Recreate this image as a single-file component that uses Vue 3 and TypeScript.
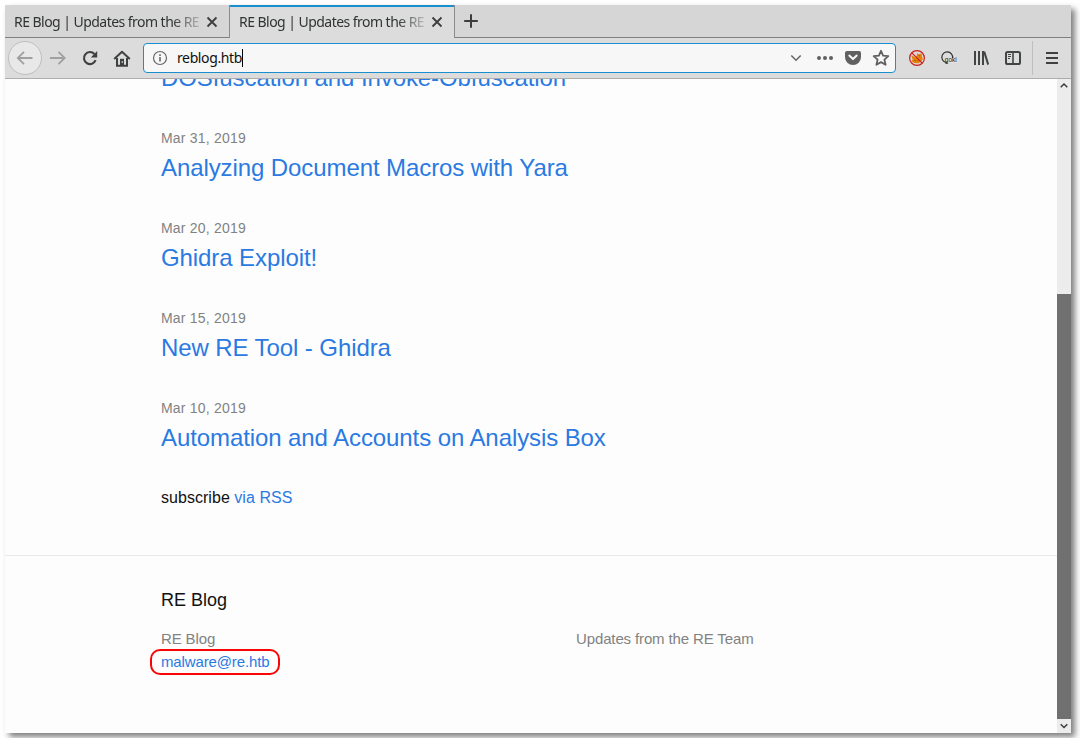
<script setup lang="ts">
interface Post {
  date: string
  title: string
}

const tabs: { title: string; active: boolean }[] = [
  { title: 'RE Blog | Updates from the RE', active: false },
  { title: 'RE Blog | Updates from the RE', active: true },
]

const posts: Post[] = [
  { date: '', title: 'DOSfuscation and Invoke-Obfuscation' },
  { date: 'Mar 31, 2019', title: 'Analyzing Document Macros with Yara' },
  { date: 'Mar 20, 2019', title: 'Ghidra Exploit!' },
  { date: 'Mar 15, 2019', title: 'New RE Tool - Ghidra' },
  { date: 'Mar 10, 2019', title: 'Automation and Accounts on Analysis Box' },
]
</script>

<template>
  <div class="window">
    <div class="tabbar">
      <div v-for="(tab, i) in tabs" :key="i" class="tab" :class="{ active: tab.active }">
        <span class="tab-title">{{ tab.title }}</span>
        <svg class="close" width="12" height="12" viewBox="0 0 12 12"><path d="M1.5 1.5l9 9M10.5 1.5l-9 9" /></svg>
      </div>
      <div class="tab-rest">
        <svg width="16" height="16" viewBox="0 0 16 16"><path d="M8 1.2v13.6M1.2 8h13.6" stroke="#3c3e3e" stroke-width="2" /></svg>
      </div>
    </div>

    <div class="toolbar">
      <div class="back">
        <svg width="18" height="16" viewBox="0 0 18 16"><path d="M16.5 8H2M8 1.8L1.8 8 8 14.2" /></svg>
      </div>
      <svg class="forward" width="18" height="16" viewBox="0 0 18 16"><path d="M1 8h14.5M9.5 1.8L15.7 8l-6.2 6.2" /></svg>
      <svg class="reload" width="16" height="16" viewBox="0 0 16 16">
        <path d="M13.6 10.2A6 6 0 1 1 12.4 4" fill="none" stroke="#3f4141" stroke-width="2.1" />
        <path d="M15.2 1v6.4H8.8z" fill="#3f4141" />
      </svg>
      <svg class="home" width="18" height="17" viewBox="0 0 18 17">
        <path d="M1.2 9L9 1.8 16.8 9" fill="none" stroke="#3f4141" stroke-width="2" stroke-linejoin="round" />
        <path d="M4 8v7.8h10V8" fill="none" stroke="#3f4141" stroke-width="2" />
        <path d="M7 15.5V8.8h4v6.7z" fill="#3f4141" />
        <path d="M9.2 11v2" stroke="#ddd" />
      </svg>

      <div class="urlbar">
        <svg class="info" width="16" height="16" viewBox="0 0 16 16">
          <circle cx="8" cy="8" r="6.5" fill="none" stroke="#666" stroke-width="1.2" />
          <path d="M8 7v4.6M8 4.2v1.7" stroke="#666" stroke-width="1.6" />
        </svg>
        <span class="url">reblog.htb</span>
        <span class="caret"></span>
        <span class="grow"></span>
        <svg class="chevron" width="12" height="8" viewBox="0 0 12 8"><path d="M1.3 1.5L6 6.2l4.7-4.7" fill="none" stroke="#666" stroke-width="1.5" /></svg>
        <svg class="dots" width="18" height="6" viewBox="0 0 18 6" fill="#606060"><circle cx="3" cy="3" r="2" /><circle cx="9" cy="3" r="2" /><circle cx="15" cy="3" r="2" /></svg>
        <svg class="pocket" width="16" height="14" viewBox="0 0 16 14">
          <path d="M2 0h12a2 2 0 0 1 2 2v4a8 8 0 0 1-16 0V2a2 2 0 0 1 2-2z" fill="#606060" />
          <path d="M4.3 4.6L8 8.1l3.7-3.5" fill="none" stroke="#f7f7f7" stroke-width="2" stroke-linecap="round" stroke-linejoin="round" />
        </svg>
        <svg class="star" width="18" height="18" viewBox="0 0 18 18"><path d="M9 1.8l2.1 4.8 5.2.5-3.9 3.5 1.2 5.2L9 13.1l-4.6 2.7 1.2-5.2-3.9-3.5 5.2-.5z" fill="none" stroke="#606060" stroke-width="1.8" stroke-linejoin="round" /></svg>
      </div>

      <svg class="foxy" width="18" height="18" viewBox="0 0 18 18">
        <circle cx="9" cy="9" r="7.4" fill="#ddd6d2" />
        <path d="M3.4 6.6l2.2.6 1.6 1.2 1.6-1.6.4-2.6 1.8 1 2.8-.8.2 3.2.8 2.4-1.6 2.6-2.8 1.6-3.6-.2-3.4-1.2 1.2-2.2z" fill="#e5820c" />
        <path d="M10.6 6.6l1.4.4M6 11l2 1.2M9.6 11.2l1.6-.4" stroke="#9c5708" />
        <circle cx="9" cy="9" r="7.4" fill="none" stroke="#cc2020" stroke-width="1.2" />
        <path d="M3.8 3.8l10.4 10.4" stroke="#cc2020" stroke-width="1.2" />
      </svg>
      <svg class="goki" width="18" height="16" viewBox="0 0 18 16">
        <path d="M8 12.6A5.4 5.4 0 1 1 12.6 8" fill="none" stroke="#303030" stroke-width="1.2" />
        <path d="M6 8.6h10.5v4.2H7z" fill="#e6e6e6" />
        <text x="4.8" y="12.2">goki</text>
      </svg>
      <svg class="library" width="16" height="14" viewBox="0 0 16 14"><path d="M2 0v14M6 0v14M10 0v14M11.2 .6l4 13" fill="none" stroke="#434545" stroke-width="2" /></svg>
      <svg class="sidebar" width="16" height="14" viewBox="0 0 16 14">
        <rect x="1" y="1" width="14" height="12" rx="1.6" fill="none" stroke="#434545" stroke-width="2" />
        <path d="M8 1v12" stroke="#434545" stroke-width="1.6" />
        <path d="M3 3.5h3M3 5.5h3M3 7.5h2" stroke="#434545" />
      </svg>
      <span class="separator"></span>
      <svg class="menu" width="12" height="12" viewBox="0 0 12 12"><path d="M0 1h12M0 6h12M0 11h12" stroke="#3f4141" stroke-width="2" /></svg>
    </div>

    <div class="viewport">
      <div class="page">
        <main class="content">
          <ul class="posts">
            <li v-for="post in posts" :key="post.title">
              <div class="date">{{ post.date }}</div>
              <h3><a>{{ post.title }}</a></h3>
            </li>
          </ul>
          <p class="subscribe">subscribe <a>via RSS</a></p>
        </main>
        <footer>
          <h2>RE Blog</h2>
          <div class="columns">
            <div class="contact">
              <div>RE Blog</div>
              <div class="mail"><a>malware@re.htb</a><span class="mark"></span></div>
            </div>
            <div>Updates from the RE Team</div>
          </div>
        </footer>
      </div>
      <div class="scrollbar">
        <svg width="14" height="14" viewBox="0 0 14 14"><path d="M3.7 8.3L7 5l3.3 3.3" /></svg>
        <div class="track"><div class="thumb"></div></div>
        <svg width="14" height="14" viewBox="0 0 14 14"><path d="M3.7 5.2L7 8.5l3.3-3.3" /></svg>
      </div>
    </div>
  </div>
</template>

<style>
html {
  background: #fff;
  overflow: hidden;
}
body {
  margin: 0;
}
</style>

<style scoped>
* {
  box-sizing: border-box;
}
svg {
  display: block;
  flex: none;
}
.window {
  width: 1066px;
  height: 728px;
  margin: 5px;
  display: flex;
  flex-direction: column;
  box-shadow: 4px 4px 6px rgba(0, 0, 0, 0.5);
  background: #fdfdfd;
}
.tabbar {
  height: 33px;
  flex: none;
  display: flex;
  background: #d6d6d6;
  font: 14px/20px "Noto Sans", sans-serif;
  color: #303333;
}
.tab {
  width: 224px;
  display: flex;
  align-items: center;
  padding: 1px 11px 0 9px;
  border-bottom: 1px solid #808080;
}
.tab.active {
  width: 226px;
  border: 1px solid #8c8c8c;
  border-top: 0;
  border-bottom: 0;
  background: #dcdcdc;
  box-shadow: inset 0 2px #1a8fd0;
}
.tab-title {
  width: 188px;
  white-space: nowrap;
  overflow: hidden;
  letter-spacing: -0.54px;
  -webkit-mask-image: linear-gradient(to right, #000 158px, transparent 192px);
  mask-image: linear-gradient(to right, #000 158px, transparent 192px);
}
.close {
  margin-left: 4px;
}
.close path {
  stroke: #3c3e3e;
  stroke-width: 1.8;
}
.tab-rest {
  flex: 1;
  padding: 8px 0 0 8px;
  border-bottom: 1px solid #808080;
}
.toolbar {
  height: 41px;
  flex: none;
  display: flex;
  align-items: center;
  background: #dcdcdc;
  border-bottom: 1px solid #adadad;
}
.back {
  width: 34px;
  height: 34px;
  margin-left: 3px;
  display: flex;
  align-items: center;
  justify-content: center;
  border: 1px solid #bfbfbf;
  border-radius: 50%;
  background: #e8e8e8;
}
.back path,
.forward path {
  fill: none;
  stroke: #a0a0a0;
  stroke-width: 1.8;
}
.forward {
  margin-left: 7px;
}
.reload {
  margin-left: 15px;
}
.home {
  margin-left: 15px;
}
.urlbar {
  width: 753px;
  height: 30px;
  margin-left: 12px;
  display: flex;
  align-items: center;
  border: 1px solid #1a8fd0;
  border-radius: 4px;
  background: #f7f7f7;
}
.info {
  margin-left: 8px;
}
.url {
  margin-left: 9px;
  font: 14px/20px "Noto Sans", sans-serif;
  letter-spacing: -0.38px;
  color: #101010;
}
.caret {
  width: 1px;
  height: 18px;
  background: #000;
}
.grow {
  flex: 1;
}
.dots {
  margin-left: 14px;
}
.pocket {
  margin-left: 11px;
}
.star {
  margin: 0 5px 0 11px;
}
.foxy {
  margin-left: 12px;
}
.goki {
  margin-left: 14px;
}
.goki text {
  font: 6.5px "Liberation Sans", sans-serif;
  fill: #202020;
}
.library {
  margin-left: 15px;
}
.sidebar {
  margin-left: 16px;
}
.separator {
  width: 1px;
  height: 34px;
  margin-left: 11px;
  background: #bebebe;
}
.menu {
  margin-left: 13px;
}
.viewport {
  flex: 1;
  min-height: 0;
  display: flex;
}
.page {
  flex: 1;
  overflow: hidden;
  font: 16px/24px "Liberation Sans", Arial, sans-serif;
  color: #111;
}
a {
  color: #2a7ae2;
}
.content {
  display: flow-root;
  height: 476px;
  padding: 0 156px;
}
.posts {
  list-style: none;
  margin: -43px 0 0;
  padding: 0;
}
li {
  margin-bottom: 30px;
}
.date {
  height: 24px;
  font-size: 14px;
  letter-spacing: 0.2px;
  color: #828282;
}
h3 {
  margin: 0;
  font-size: 24px;
  font-weight: 400;
  line-height: 36px;
  letter-spacing: -0.09px;
}
.subscribe {
  margin: 0;
  letter-spacing: 0.04px;
}
footer {
  border-top: 1px solid #e8e8e8;
  padding: 31px 156px;
}
h2 {
  margin: 0 0 14px;
  font-size: 18px;
  line-height: 27px;
  font-weight: 400;
}
.columns {
  display: flex;
  font-size: 15px;
  line-height: 22.5px;
  letter-spacing: -0.13px;
  color: #828282;
}
.contact {
  width: 415px;
}
.mail {
  position: relative;
}
.mark {
  position: absolute;
  left: -11.5px;
  top: -2px;
  width: 130px;
  height: 26px;
  border: 2px solid #fa0505;
  border-radius: 10px;
}
.scrollbar {
  width: 14px;
  display: flex;
  flex-direction: column;
  background: #ececec;
}
.scrollbar path {
  fill: none;
  stroke: #3c3e3e;
  stroke-width: 1.5;
}
.track {
  flex: 1;
  padding-top: 201px;
}
.thumb {
  height: 100%;
  background: #707070;
}
</style>
